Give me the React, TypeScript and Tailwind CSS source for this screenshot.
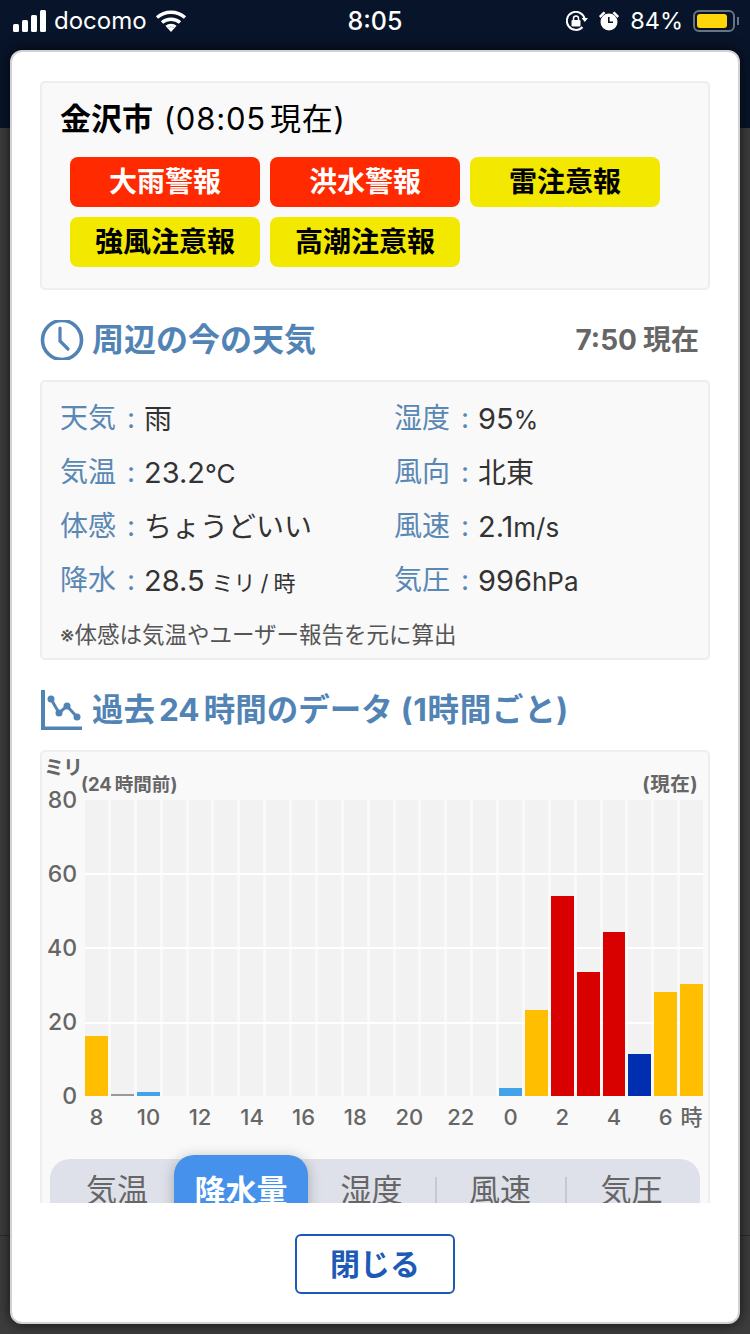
const jp = { fontFamily: 'Inter, "Noto Sans CJK JP", sans-serif' };

function Badge({ t, red }: { t: string; red?: boolean }) {
  return (
    <div className={`w-[190px] h-[50px] rounded-[8px] flex items-center justify-center text-[28px] font-bold leading-none ${red ? 'bg-[#ff2a00] text-white' : 'bg-[#f2e800] text-black'}`}>
      {t}
    </div>
  );
}

function Info({ label, children }: { label: string; children: React.ReactNode }) {
  return (
    <div className="h-[54px] flex items-center whitespace-nowrap">
      <span className="text-[#5a88b4] text-[28px] w-[84px] shrink-0 flex">
        <span className="w-[56px]">{label}</span>
        <span className="w-[28px] pl-[11px]">:</span>
      </span>
      <span className="text-[#333] text-[29px] leading-none">{children}</span>
    </div>
  );
}

const bars: [number, string][] = [
  [60, '#ffbe00'], [2, '#999999'], [4, '#43a3e8'], [0, ''], [0, ''], [0, ''], [0, ''], [0, ''],
  [0, ''], [0, ''], [0, ''], [0, ''], [0, ''], [0, ''], [0, ''], [0, ''],
  [8, '#43a3e8'], [86, '#ffbe00'], [200, '#d90000'], [124, '#d90000'], [164, '#d90000'], [42, '#002eb0'], [104, '#ffbe00'], [112, '#ffbe00'],
];
const hours = ['8', '10', '12', '14', '16', '18', '20', '22', '0', '2', '4'];
const cols = { gridTemplateColumns: 'repeat(24, minmax(0, 1fr))' };

function Chart() {
  return (
    <div className="pl-[2px]">
      <div className="relative h-[48px] text-[#666] font-bold leading-none">
        <span className="absolute left-0 top-[6px] text-[20px] tracking-[-1px]">ミリ</span>
        <span className="absolute left-[37px] top-[23px] text-[18.5px] whitespace-nowrap">(24<span className="ml-[3px]">時間前</span>)</span>
        <span className="absolute right-[10px] top-[23px] text-[19.5px] tracking-[0.5px]">(現在)</span>
      </div>
      <div className="flex">
        <div className="w-[41px] h-[296px] flex flex-col justify-between items-end pr-[8px] text-[#666] text-[23px] font-medium leading-none">
          {['80', '60', '40', '20', '0'].map((n) => (
            <span key={n} className="h-0 flex items-center">{n}</span>
          ))}
        </div>
        <div className="relative w-[618px] h-[296px]">
          <div className="grid gap-x-[3px] h-full" style={cols}>
            {bars.map((_, i) => (
              <div key={i} className="bg-[#f2f2f2]" />
            ))}
          </div>
          <div className="absolute inset-0 flex flex-col justify-evenly">
            <div className="h-[2px] bg-white" />
            <div className="h-[2px] bg-white" />
            <div className="h-[2px] bg-white" />
          </div>
          <div className="absolute inset-0 grid gap-x-[3px]" style={cols}>
            {bars.map(([h, c], i) => (
              <div key={i} className="flex items-end">
                <div className="w-full" style={{ height: h, background: c }} />
              </div>
            ))}
          </div>
        </div>
      </div>
      <div className="ml-[41px] w-[618px] grid gap-x-[3px] mt-[10px] text-[#666] text-[22px] font-medium leading-[22px]" style={cols}>
        {hours.map((h) => (
          <span key={h} className="col-span-2">
            <span className="block w-[23px] text-center whitespace-nowrap">{h}</span>
          </span>
        ))}
        <span className="text-center">6</span>
        <span className="text-center">時</span>
      </div>
    </div>
  );
}

function Tabs() {
  return (
    <div className="mx-[8px] mt-[31px] h-[80px] bg-[#dfe1ea] rounded-[20px] flex items-start text-[#666] text-[31px] leading-none">
      <div className="w-[124px] h-[60px] pl-[10px] flex items-center justify-center">気温</div>
      <div className="w-[134px] h-[80px] -mt-[4px] bg-[#4591ec] rounded-[20px] text-white font-bold flex items-center justify-center pb-[10px] shadow-[0_2px_14px_rgba(0,0,0,0.25)]">降水量</div>
      <div className="w-[127px] h-[60px] flex items-center justify-center">湿度</div>
      <div className="w-[130px] h-[60px] flex items-center justify-center relative">
        <span className="absolute left-0 top-[18px] w-[2px] h-[28px] bg-[#c6c8cf]" />
        風速
      </div>
      <div className="w-[133px] h-[60px] flex items-center justify-center relative">
        <span className="absolute left-0 top-[18px] w-[2px] h-[28px] bg-[#c6c8cf]" />
        気圧
      </div>
    </div>
  );
}

export default function App() {
  return (
    <div style={jp} className="w-[750px] h-[1334px] overflow-hidden relative bg-[#3d3d3d]">
      <div className="h-[128px] bg-[#08142a] absolute top-0 left-0 right-0" />
      <div className="absolute left-0 right-0 top-[1235px] h-[1px] bg-[#2c2c2c]" />
      <div className="relative h-[50px] text-white flex items-center justify-between pl-[13px] pr-[11px] pb-[8px]">
        <div className="flex items-center gap-[7px] w-[200px]">
          <svg width="34" height="22" viewBox="0 0 34 22" fill="#fff">
            <rect x="0" y="14" width="6" height="8" rx="1.5" />
            <rect x="9" y="10" width="6" height="12" rx="1.5" />
            <rect x="18" y="5" width="6" height="17" rx="1.5" />
            <rect x="27" y="0" width="6" height="22" rx="1.5" />
          </svg>
          <span className="text-[24px] leading-none">docomo</span>
          <svg width="32" height="24" viewBox="0 0 32 24" fill="none" stroke="#fff" strokeWidth="3.4" className="ml-[1px]">
            <path d="M2 8.5c8-7 20-7 28 0" />
            <path d="M7 13.5c5-4.4 13-4.4 18 0" />
            <path d="M11.500 18c2.600-2.200 6.400-2.200 9 0" />
            <path d="M16 23l-3.600-4c2-1.400 5.200-1.400 7.200 0z" fill="#fff" stroke="none" />
          </svg>
        </div>
        <span className="text-[25px] font-medium leading-none -ml-[2px]">8:05</span>
        <div className="w-[200px] flex items-center justify-end relative">
          <svg width="22" height="20" viewBox="0 0 22 20" fill="none" stroke="#fff" strokeWidth="2" className="mr-[11px]">
            <path d="M16.500 16a9 9 0 1 1 2.200-8" />
            <path d="M22 7l-3.200 4-3.200-4z" fill="#fff" stroke="none" />
            <rect x="5.500" y="9" width="9" height="6.500" rx="1" fill="#fff" stroke="none" />
            <path d="M7.500 9V7.500a2.500 2.500 0 0 1 5 0V9" strokeWidth="1.500" />
          </svg>
          <svg width="20" height="20" viewBox="0 0 20 20" fill="#fff" className="mr-[11px]">
            <path fillRule="evenodd" d="M10 2.500a8.500 8.500 0 1 1 0 17 8.500 8.500 0 0 1 0-17zM9 6v6h5v-1.600h-3.400V6z" />
            <path d="M0 5l4.500-4.500 2 1.500L1.500 7zM20 5l-4.500-4.500-2 1.500 5 5z" />
          </svg>
          <span className="text-[23.5px] leading-none mr-[10px]">84%</span>
          <div className="w-[42px] h-[22px] rounded-[6px] border-2 border-[#6a7280] pl-[2px] py-[2px] shrink-0">
            <div className="w-[30px] h-full rounded-[3px] bg-[#ffd60a]" />
          </div>
          <div className="w-[2px] h-[8px] bg-[#6a7280] ml-[2px]" />
        </div>
      </div>

      <div className="relative mx-[10px] w-[730px] h-[1274px] bg-white rounded-[12px] flex flex-col shadow-[0_0_14px_rgba(0,0,0,0.7)] overflow-hidden border-2 border-[#d2d2d2]">
        <div className="h-[1151px] overflow-hidden shrink-0 px-[28px] pt-[29px]">
          <section className="w-[670px] h-[209px] bg-[#f9f9f9] border-2 border-[#eeeeee] rounded-[5px] pl-[18px] pt-[14px]">
            <div className="text-[31px] leading-[44px] text-black whitespace-nowrap">
              <b>金沢市</b> <span className="tracking-[0.8px] ml-[2px]">(08:05<span className="ml-[4px]">現在)</span></span>
            </div>
            <div className="ml-[10px] mt-[16px] flex flex-wrap gap-[10px] w-[600px]">
              <Badge t="大雨警報" red />
              <Badge t="洪水警報" red />
              <Badge t="雷注意報" />
              <Badge t="強風注意報" />
              <Badge t="高潮注意報" />
            </div>
          </section>

          <div className="h-[90px] pt-[9px] flex items-center justify-between w-[670px] pr-[11px]">
            <div className="flex items-center gap-[8px]">
              <svg width="44" height="40" viewBox="0 0 44 40" fill="none" stroke="#5283b5" strokeWidth="3.600">
                <circle cx="22" cy="20" r="19.500" />
                <path d="M20 8v13l8 8" strokeLinecap="round" strokeWidth="3.200" />
              </svg>
              <span className="text-[#5283b5] text-[32px] font-bold leading-none">周辺の今の天気</span>
            </div>
            <span className="text-[#666] text-[28px] font-bold leading-none">7:50<span className="ml-[6px]">現在</span></span>
          </div>

          <section className="w-[670px] h-[280px] bg-[#f9f9f9] border-2 border-[#eeeeee] rounded-[5px] pl-[18px] pt-[9px]">
            <div className="grid grid-cols-2 w-[668px]">
              <div className="w-[334px]">
                <Info label="天気"><span className="text-[28px]">雨</span></Info>
                <Info label="気温">23.2<span className="text-[26px]">°C</span></Info>
                <Info label="体感"><span className="text-[28px]">ちょうどいい</span></Info>
                <Info label="降水">28.5<span className="text-[22px] ml-[7px]">ミリ<span className="mx-[5px]">/</span>時</span></Info>
              </div>
              <div>
                <Info label="湿度">95<span className="text-[25px]">%</span></Info>
                <Info label="風向"><span className="text-[28px]">北東</span></Info>
                <Info label="風速">2.1<span className="text-[26px]">m/s</span></Info>
                <Info label="気圧">996<span className="text-[26px]">hPa</span></Info>
              </div>
            </div>
            <div className="text-[#555] text-[22.5px] leading-none mt-[17px] whitespace-nowrap">※体感は気温やユーザー報告を元に算出</div>
          </section>

          <div className="h-[90px] pt-[9px] flex items-center gap-[8px]">
            <svg width="44" height="40" viewBox="0 0 44 40" fill="none" stroke="#5283b5">
              <path d="M3 0v38.500h39" strokeWidth="4" />
              <path d="M11 9l8 14 8-7 10 11" strokeWidth="3" />
              <circle cx="11" cy="9" r="3.500" fill="#5283b5" stroke="none" />
              <circle cx="19" cy="23" r="3.500" fill="#5283b5" stroke="none" />
              <circle cx="27" cy="16" r="3.500" fill="#5283b5" stroke="none" />
              <circle cx="37" cy="27" r="3.500" fill="#5283b5" stroke="none" />
            </svg>
            <span className="text-[#5283b5] text-[31.5px] font-bold leading-none whitespace-nowrap">過去<span className="mx-[4px]">24</span>時間のデータ<span className="ml-[8px] tracking-[0.7px]">(1時間ごと)</span></span>
          </div>

          <section className="w-[670px] h-[470px] bg-[#f9f9f9] border-2 border-[#eeeeee] rounded-[5px]">
            <Chart />
            <Tabs />
          </section>
        </div>
        <div className="flex-1 flex items-start justify-center pt-[31px]">
          <div className="w-[160px] h-[60px] rounded-[6px] border-2 border-[#1d5ab8] flex items-center justify-center text-[#1d5ab8] text-[30px] font-bold leading-none">閉じる</div>
        </div>
      </div>
    </div>
  );
}
